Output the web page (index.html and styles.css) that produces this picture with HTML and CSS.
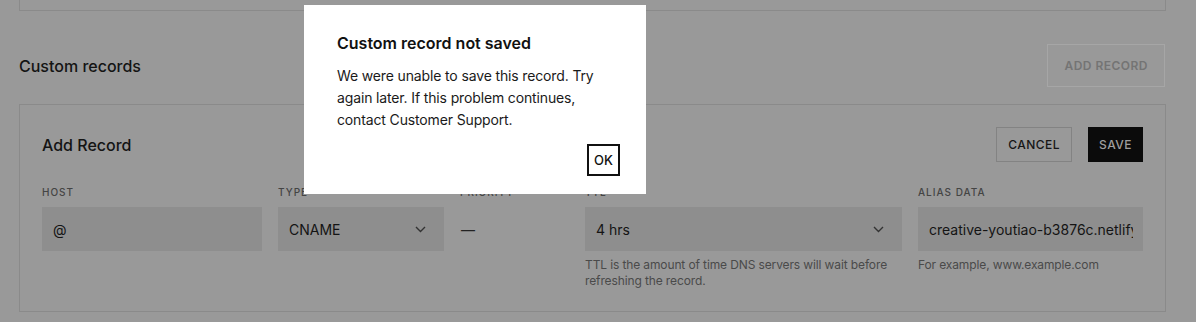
FILE: index.html
```html
<!DOCTYPE html>
<html lang="en">
<head>
<meta charset="utf-8">
<title>Custom records</title>
<link rel="stylesheet" href="styles.css">
</head>
<body>
<div class="page">
  <div class="top-card"></div>

  <div class="section-head">
    <h2 class="section-title">Custom records</h2>
    <button class="btn btn-ghost" aria-disabled="true">ADD RECORD</button>
  </div>

  <div class="card">
    <div class="card-head">
      <h3 class="card-title">Add Record</h3>
      <div class="actions">
        <button class="btn btn-outline">CANCEL</button>
        <button class="btn btn-solid">SAVE</button>
      </div>
    </div>

    <div class="fields">
      <div class="field">
        <div class="label">HOST</div>
        <div class="input">@</div>
      </div>
      <div class="field">
        <div class="label">TYPE</div>
        <div class="input select">CNAME
          <svg class="chev" width="11" height="7" viewBox="0 0 11 7"><path d="M1 1l4.5 4.5L10 1" fill="none" stroke="#333" stroke-width="1.4"/></svg>
        </div>
      </div>
      <div class="field">
        <div class="label">PRIORITY</div>
        <div class="plain">—</div>
      </div>
      <div class="field">
        <div class="label">TTL</div>
        <div class="input select">4 hrs
          <svg class="chev" width="11" height="7" viewBox="0 0 11 7"><path d="M1 1l4.5 4.5L10 1" fill="none" stroke="#333" stroke-width="1.4"/></svg>
        </div>
        <p class="help">TTL is the amount of time DNS servers will wait before refreshing the record.</p>
      </div>
      <div class="field">
        <div class="label">ALIAS DATA</div>
        <input class="input text-input" type="text" readonly value="creative-youtiao-b3876c.netlify.app">
        <p class="help">For example, www.example.com</p>
      </div>
    </div>
  </div>
</div>

<div class="modal" role="dialog">
  <h4 class="modal-title">Custom record not saved</h4>
  <p class="modal-body">We were unable to save this record. Try again later. If this problem continues, contact Customer Support.</p>
  <div class="modal-foot">
    <button class="btn-ok">OK</button>
  </div>
</div>
</body>
</html>
```

FILE: styles.css
```css
* { box-sizing: border-box; }
html, body {
  margin: 0;
  padding: 0;
  height: 322px;
  overflow: hidden;
  background: #999999;
  font-family: Inter, "Liberation Sans", sans-serif;
  color: #141414;
}
.page {
  padding: 0 30px 0 19px;
}
.top-card {
  height: 11px;
  border: 1px solid #8a8a8a;
  border-top: none;
}
.section-head {
  margin-top: 33px;
  display: flex;
  align-items: center;
  justify-content: space-between;
}
.section-title {
  margin: 0;
  font-size: 16px;
  font-weight: 500;
  line-height: 22px;
}
.btn {
  font-family: inherit;
  font-size: 12px;
  letter-spacing: 0.04em;
  font-weight: 500;
  border-radius: 0;
  cursor: pointer;
}
.btn-ghost {
  height: 43px;
  padding: 0 16px;
  background: transparent;
  border: 1px solid #a6a6a6;
  color: #747474;
  font-weight: 600;
  margin-right: 1px;
}
.card {
  margin-top: 17px;
  border: 1px solid #8a8a8a;
  padding: 22px;
}
.card-head {
  display: flex;
  align-items: center;
  justify-content: space-between;
  height: 35px;
}
.card-title {
  margin: 0;
  font-size: 16px;
  font-weight: 500;
}
.actions {
  display: flex;
  gap: 16px;
}
.btn-outline {
  height: 35px;
  padding: 0 11px;
  background: transparent;
  border: 1px solid #838383;
  color: #161616;
}
.btn-solid {
  height: 35px;
  padding: 0 10px;
  background: #0b0b0b;
  border: 1px solid #0b0b0b;
  color: #9e9e9e;
}
.fields {
  margin-top: 24px;
  display: grid;
  grid-template-columns: 220px 166px 109px 317px 225px;
  column-gap: 16px;
}
.label {
  font-size: 10px;
  font-weight: 500;
  letter-spacing: 0.1em;
  line-height: 12px;
  color: #444444;
  margin-bottom: 9px;
}
.input {
  height: 44px;
  background: #8e8e8e;
  display: flex;
  align-items: center;
  padding: 0 10px 0 11px;
  font-size: 14px;
  color: #141414;
  white-space: nowrap;
}
.input.select {
  justify-content: space-between;
  padding-right: 18px;
}
.text-input {
  display: block;
  width: 100%;
  border: none;
  outline: none;
  margin: 0;
  font-family: inherit;
  font-size: 14px;
  color: #141414;
  background: #8e8e8e;
}
.plain {
  height: 44px;
  display: flex;
  align-items: center;
  padding-left: 1px;
  font-size: 14px;
  color: #222;
}
.help {
  margin: 6px 0 0;
  font-size: 12px;
  line-height: 16px;
  color: #4a4a4a;
  letter-spacing: -0.01em;
}

.modal {
  position: fixed;
  left: 304px;
  top: 5px;
  width: 342px;
  height: 189px;
  background: #ffffff;
  padding: 27px 26px 18px 33px;
}
.modal-title {
  margin: 0;
  font-size: 16px;
  font-weight: 600;
  line-height: 22px;
  color: #111;
}
.modal-body {
  margin: 11px 0 0;
  font-size: 14px;
  line-height: 22px;
  color: #1a1a1a;
  letter-spacing: -0.01em;
}
.modal-foot {
  margin-top: 13px;
  display: flex;
  justify-content: flex-end;
}
.btn-ok {
  width: 33px;
  height: 32px;
  padding: 0;
  background: #fff;
  border: 2px solid #111;
  border-radius: 0;
  font-family: inherit;
  font-size: 13px;
  font-weight: 500;
  color: #111;
}
```
